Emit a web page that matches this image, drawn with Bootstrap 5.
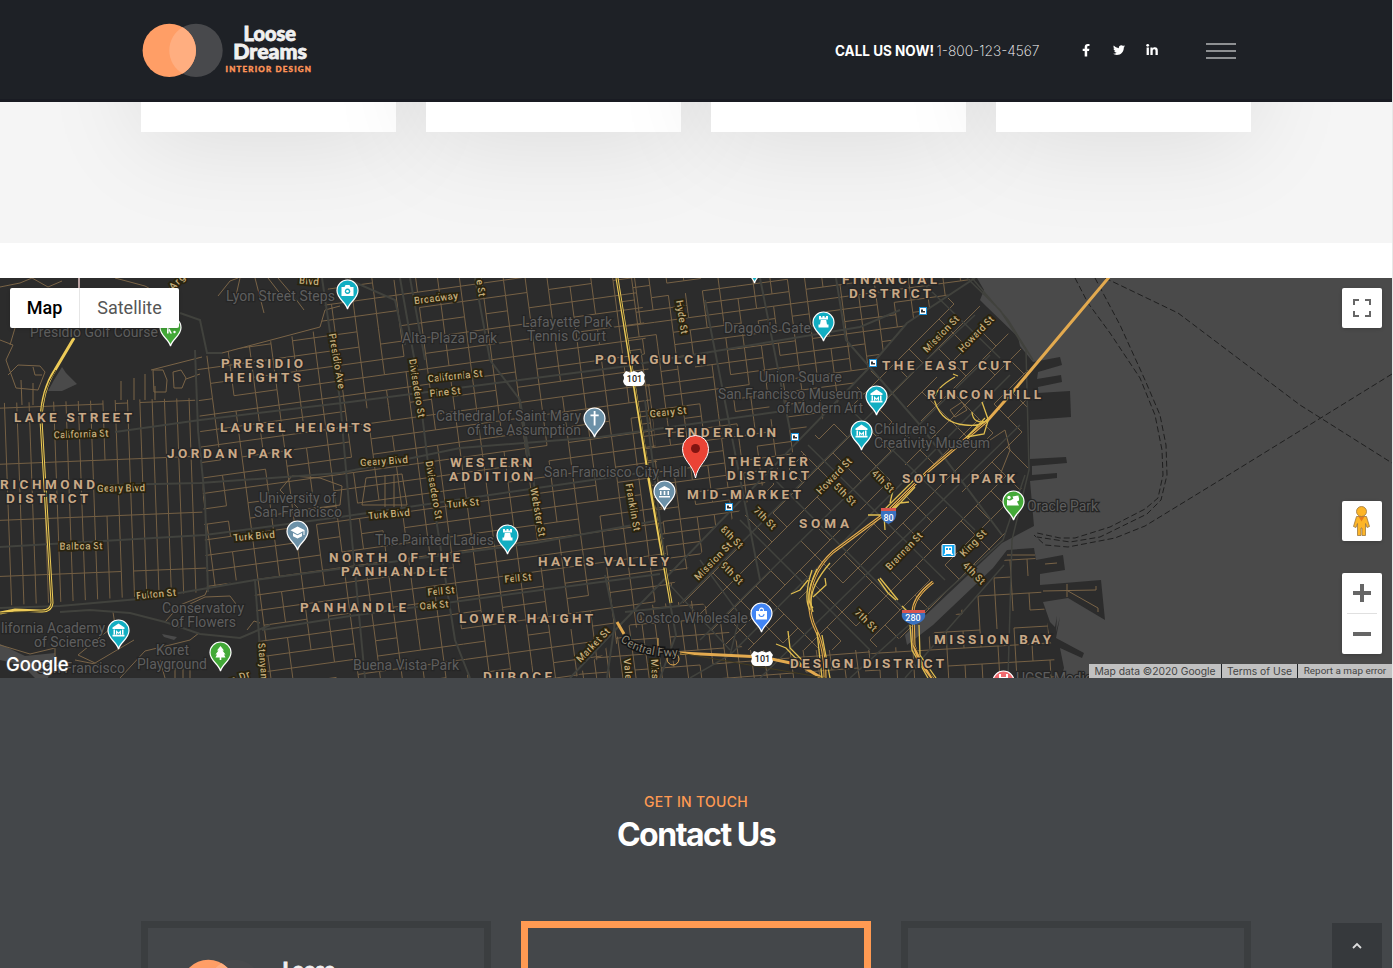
<!DOCTYPE html>
<html lang="en">
<head>
<meta charset="utf-8">
<meta name="viewport" content="width=device-width, initial-scale=1">
<title>Loose Dreams Interior Design</title>
<link href="https://cdn.jsdelivr.net/npm/bootstrap@5.3.0/dist/css/bootstrap.min.css" rel="stylesheet">
<style>
  html, body { height: 968px; overflow: hidden; }
  body { font-family: Inter, "Open Sans", sans-serif; background: #fff; }
  .page-wrap { height: 968px; margin-right: 1px; overflow: hidden; box-shadow: 1px 0 0 #e8e8e8; }
  .site-head { height: 102px; background: #1e2126; border-bottom: 3px solid #191b22; position: relative; z-index: 2; }
  .phone-line { width: 205px; font-size: 14px; line-height: 20px; white-space: nowrap; margin-right: 40px; padding-top: 2px; }
  .phone-line svg, .soc svg { display: block; }
  .soc { gap: 21px; margin-right: 48px; }
  .burger { width: 30px; gap: 5px; margin-right: 15px; padding-top: 2px; }
  .burger span { height: 2px; background: #8e9092; }
  .team { height: 141px; background: #f5f5f5; overflow: hidden; }
  .team .row, .offices .row { --bs-gutter-x: 30px; }
  .team .container, .offices .container, .site-head .container { padding: 0 15px; }
  .team-card { height: 330px; margin-top: -300px; background: #fff; box-shadow: 0 10px 100px rgba(0,0,0,.1); }
  .map-box { height: 400px; margin-top: 35px; background: #4a4a4a; overflow: hidden; }
  .map-box > svg { display: block; }
  .ctl { background: #fff; border-radius: 2px; box-shadow: 0 1px 4px -1px rgba(0,0,0,.3); position: absolute; }
  .ctl-type { left: 10px; top: 10px; width: 169px; height: 40px; font: 18px/40px Roboto, sans-serif; color: #565656; text-align: center; }
  .ctl-type b { width: 70px; border-right: 1px solid #e6e6e6; font-weight: 500; color: #000; }
  .ctl-sq { right: 10px; width: 40px; height: 40px; }
  .ctl-zoom { height: 81px; top: 295px; }
  .attrib { position: absolute; right: 0; bottom: 0; height: 14px; font: 10.3px/14px Inter, sans-serif; color: #444; white-space: nowrap; }
  .attrib span { background: #c1c1c1; text-align: center; }
  .contact { height: 290px; padding-top: 113px; background: #44474a; }
  .kicker { font-size: 14px; line-height: 21px; font-weight: 500; color: #ff9a52; letter-spacing: .3px; }
  .contact h2 { font-size: 32px; line-height: 46px; font-weight: 700; letter-spacing: -1.5px; color: #fff; margin-bottom: 63px; }
  .office { height: 120px; border: 7px solid #3b3e40; }
  .office.hot { border-color: #ff9a52; }
  .office svg { display: block; margin: 31px 0 0 32px; }
  .to-top { position: absolute; left: 1332px; top: 923px; width: 50px; height: 45px; background: #36393c; }
  .lb-area { font: 700 13.5px Roboto, sans-serif; fill: #c9a987; stroke: #262626; stroke-width: 3px; paint-order: stroke; }
  .lb-road { font: 500 10px Roboto, sans-serif; fill: #c4ad7c; stroke: #29230f; stroke-width: 3.5px; paint-order: stroke; text-anchor: middle; }
  .lb-poi { font: 400 14px Roboto, sans-serif; fill: #5e5e5e; stroke: #252525; stroke-width: 2.5px; paint-order: stroke; }
</style>
</head>
<body>
<div class="page-wrap position-relative">
  <header class="site-head">
    <div class="container h-100 d-flex align-items-center">
      <svg class="me-auto" width="174" height="60" viewBox="141 20 174 60">
        <g id="brand">
          <circle cx="196" cy="50.4" r="26.7" fill="#48494c"/>
          <circle cx="169.3" cy="50.4" r="26.7" fill="#ff9e66"/>
          <path d="M182.6 27.3a26.7 26.7 0 0 1 0 46.2a26.7 26.7 0 0 1 0-46.2z" fill="#ffae80"/>
          <g font-family="Lato, sans-serif" font-weight="900" fill="#f0f0f0" stroke="#f0f0f0" stroke-width=".8">
            <text x="243.5" y="41.3" font-size="20" textLength="52.5" lengthAdjust="spacingAndGlyphs">Loose</text>
            <text x="233.3" y="58.6" font-size="20" textLength="73.7" lengthAdjust="spacingAndGlyphs">Dreams</text>
            <text x="225.5" y="72" font-size="8" fill="#ff9458" stroke="#ff9458" stroke-width=".4" textLength="85.500" lengthAdjust="spacing">INTERIOR DESIGN</text>
          </g>
        </g>
      </svg>
      <div class="phone-line">
        <svg width="205" height="20" viewBox="836 41 205 20" fill="#fff">
          <text x="836" y="56" font-weight="700" textLength="99" lengthAdjust="spacingAndGlyphs">CALL US NOW!</text>
          <text x="937.500" y="56" font-weight="200" textLength="103" lengthAdjust="spacingAndGlyphs">1-800-123-4567</text>
        </svg>
      </div>
      <div class="soc d-flex">
        <svg width="12" height="14" viewBox="1080 43 12 14" fill="#fff"><path d="M1084.7 56.500v-5.500h-2v-2.300h2v-1.700c0-2 1.200-3.100 3-3.100.9 0 1.800.2 1.800.2v1.900h-1c-1 0-1.300.6-1.300 1.200v1.500h2.200l-.4 2.300h-1.800v5.500z"/></svg>
        <svg width="12" height="14" viewBox="0 0 12 14"><path transform="translate(0 1) scale(.0235)" fill="#fff" d="M459 152c.3 4.500.3 9 .3 14 0 139-106 299-299 299-59 0-115-17-161-47 8 1 16 1.300 25 1.300 49 0 94-17 130-45-46-1-85-31-98-73 6.500 1 13 1.600 20 1.600 9 0 19-1.300 28-3.600-48-10-84-52-84-103v-1c14 8 30 13 47 14-28-19-47-51-47-88 0-19 5-37 14-53 52 64 129 105 216 110-1.600-8-2.600-16-2.600-24 0-58 47-105 105-105 30 0 58 13 77 33 24-5 46-13 67-25-8 24-24 45-46 58 21-2 42-8 61-16-14 21-32 39-52 54z"/></svg>
        <svg width="12" height="14" viewBox="0 0 12 14" fill="#fff"><circle cx="1.700" cy="2.300" r="1.400"/><path d="M.6 4.500h2.300v7.400H.6zM4.400 4.500h2.200v1c.4-.7 1.200-1.200 2.300-1.200 2.300 0 2.900 1.500 2.900 3.500v4.100H9.500V8.200c0-.9-.1-1.900-1.300-1.900s-1.500.9-1.500 1.900v3.700H4.400z"/></svg>
      </div>
      <div class="burger d-flex flex-column"><span></span><span></span><span></span></div>
    </div>
  </header>

  <section class="team">
    <div class="container"><div class="row">
      <div class="col-3"><div class="team-card"></div></div>
      <div class="col-3"><div class="team-card"></div></div>
      <div class="col-3"><div class="team-card"></div></div>
      <div class="col-3"><div class="team-card"></div></div>
    </div></div>
  </section>

  <section class="map-box position-relative">
    <svg id="map" width="1392" height="400" viewBox="0 278 1392 400">
      <defs>
        <clipPath id="c-west"><path d="M0 403L195 398L207 585L205 592L0 606z"/></clipPath>
        <clipPath id="c-mid"><path d="M197 358L320 330L330 278H640L670 600L575 678H262L253 575L207 590z"/></clipPath>
        <clipPath id="c-down"><path d="M618 278H972L907 323L867 370L668 590z"/></clipPath>
        <clipPath id="c-soma"><path d="M676 595L867 375L907 328L962 288L1020 345L1028 370V470L1005 535L905 636L870 650H730z"/></clipPath>
        <clipPath id="c-bay"><path d="M1007 556L1035 556L1043 602L1058 678H865V655L925 640L988 588z"/></clipPath>
        <clipPath id="c-south"><path d="M575 678L650 605L700 600L745 650H870V678z"/></clipPath>
        <g id="p-head"><path d="M0 18C-1.500 11-10.500 8-10.500-.5A10.500 10.500 0 0 1 10.500-.5C10.500 8 1.500 11 0 18z" stroke="#fff" stroke-width="1.200"/></g>
        <g id="i-rook" fill="#fff"><path d="M-4.500-6h2v1.500h1.500v-1.500h2v1.500h1.500v-1.500h2V-2.500h-9zM-2.700-2h5.400l.8 4.500h1.500v3h-10v-3h1.500z"/></g>
        <g id="i-mus" fill="#fff"><path d="M0-7L6-3v1.500h-12V-3zM-5-1h1.500v5H-5zM3.500-1H5v5H3.500zM-6 4.300H6V6H-6zM-2.500 4V-.5L0 2l2.500-2.500V4H1.300V2.300L0 3.600-1.300 2.300V4z"/></g>
      </defs>
      <rect y="278" width="1392" height="400" fill="#4a4a4a"/>
      <path fill="#2c2c2c" d="M0 278H977L984 290L980 300L987 307L1018 337L1020 346L1029 357L1033 362L1060 357L1062 365L1038 372L1037 379L1061 375L1062 382L1038 387V393L1070 391L1071 417L1030 420V459L1066 457L1067 463L1032 466V475L1057 473V478L1030 481L1034 526L1002 543L913 627L905 635L907 645L933 625L993 568L1007 550L1034 548L1036 560L1063 555L1065 570L1040 574V585L1101 580L1105 620L1068 598L1043 602L1050 622L1055 627L1057 616L1056 632L1060 617L1056 638L1084 653L1082 658L1060 648L1064 668L1061 678H0z"/>
      <path fill="#4a4a4a" d="M62 367L66 373L77 384L62 391H48L54 380zM0 644L25 656L55 653L48 678H35L22 665L0 660zM162 634L177 637L174 640L164 637z"/>
      <path fill="none" stroke="#1f1f1f" stroke-dasharray="6 3" d="M1075 278L1088 303L1110 333L1140 378L1155 415L1162 450L1163 475L1158 498L1145 509L1110 527L1075 538H1060L1037 533M1095 278L1120 325L1145 380L1160 415L1166 445L1167 475L1161 500L1147 514L1100 537L1070 542L1037 537M1105 278L1178 313L1300 405L1392 463M1392 374L1230 474L1145 526L1115 538L1068 547L1045 545L1034 535"/>
      <g id="streets" fill="none"></g>
      <g fill="none" stroke="#7a6447" stroke-width="1">
        <path d="M0 287L20 283L32 278M32 278L48 287L62 281M115 278L145 286L163 296L178 278M0 340L13 345L6 360L16 388L38 390L45 372L40 366L18 365L8 375M15 328L10 345M33 367L35 375H42M218 296L230 281L238 278M235 300L240 278M255 278L264 313M268 278L285 300M278 278L295 298L304 310M151 370L202 357M222 353L320 327L325 310L340 306M153 370H163L167 380L166 392H154zM173 372L181 370L186 378L182 388H174zM186 379L200 374M0 645L30 654L55 648L55 656M113 612L115 625L78 655L95 663L134 640M75 660L100 665M165 622L180 605L205 595L208 588M120 678L145 651L170 645L190 640L199 633M190 604L205 597L230 596L242 612M247 630L254 621L260 623M160 660L165 678M175 668V678M183 668V678M190 665V678"/>
        <path d="M121 381V400M134 378V400M145 374V400M155 386V400M21 380L22 405M33 383V405M280 490L292 476L320 478L342 486L340 505L300 510zM366 478L402 474L407 505H362zM385 475V507M394 475V507M1007 555H1035M1045 564L1057 563M1043 591L1096 590V586M1067 584V597M1068 591L1098 608V612M950 410L962 402L967 410L955 417zM990 440L1005 430L1010 450L1000 475"/>
      </g>
      <g fill="none" stroke="#41423d" stroke-width="2">
        <path d="M180 313L200 320L207 353L222 353M0 608L60 606L150 598L255 580L535 543L660 520M195 350L198 430L205 500L208 592M0 547L205 535L340 517L640 473M110 485L200 483L340 473L460 448L600 437L790 410M115 432L200 420L350 402L620 367L860 327L900 310M322 278L340 400L352 540L365 678M400 278L418 380L430 480L455 640L470 678M255 580L262 678M262 630L350 616L660 574M60 612L90 610L130 613L165 622L200 634L240 638L270 625M345 278L395 300L405 345M410 278L425 360M475 278L490 360L520 400L540 520M520 400L530 480M605 575L615 622L607 678M570 678L620 625L867 370L907 323L975 278M625 612L680 606M645 400L670 603L676 635L660 678M705 300L760 580M760 278L790 430M836 278L846 340L920 425L1002 535"/>
        <path stroke-width="1.500" d="M740 520L870 650M775 480L910 615M808 445L945 580M846 405L975 530M670 585L730 650M700 640L990 355M730 655L1010 375M760 678L1020 425M850 678L1003 540L1025 475M680 604L910 375L975 315M700 560L740 615L730 655L690 678M967 278L1000 310L1026 350L1029 470L1012 540L1008 678M972 278L1008 320L1033 360M925 285L1000 358M905 678L1004 565"/>
      </g>
      <g fill="none" stroke="#e3aa4f" stroke-width="3">
        <path d="M79 278V290" stroke="#b8a0a0" stroke-width="2"/>
        <g stroke="#edcb58"><path d="M74 338L55 370Q42 390 41 420L44 470L52 603Q51 612 40 611L15 610L0 613"/><path d="M617 278L647 465M648 474L671 603"/></g>
        <path d="M1110 276L1010 395L988 420L927 472L887 512L833 552Q813 570 810 595Q808 614 816 630Q825 648 825 678M617 622L624 634M680 653L762 657L800 665L825 680M933 582Q912 598 913 614L914 645Q918 662 934 680" />
      </g>
      <g fill="none" stroke="#433b20" stroke-width="1">
        <path d="M56 370Q42 390 41 420L44 470L52 603Q51 612 40 611L0 613M617 278L671 603M988 420L927 472L887 512L833 552Q813 570 810 595Q808 614 816 630Q825 648 825 678M680 653L825 678M933 582Q912 598 913 614L914 645L934 680"/>
      </g>
      <g fill="none" stroke="#dfbd4f" stroke-width="1.300">
        <path d="M955 377Q932 390 935 402Q942 423 965 425Q982 427 988 419L982 402M972 412Q973 425 988 421L984 434L967 437L985 418M958 376L953 374M915 487L889 515L868 515M885 530L884 515L900 503L909 502M916 478L885 509M893 490L890 503M812 570Q803 598 810 610M817 569Q803 598 813 608M830 563Q805 592 813 612M791 594L800 590L808 580M825 578L826 585L813 597M878 579L888 593L896 600M880 578L898 600M902 606L910 614M776 644L786 648L802 665M788 631L790 648L805 663M910 625L912 650L928 678M919 625L920 655L936 678M822 635L830 678M817 632L822 678"/>
      </g>
      <g stroke="#e3aa4f" fill="none"><circle cx="673" cy="659" r="6"/><path d="M658 638V650"/></g>
      <g id="labels"></g>

      <g font-family="Roboto, sans-serif" font-size="9" font-weight="500" text-anchor="middle">
        <path id="us" d="M626 371l4 1.500l4-1.500l4 1.500l4-1.500l3 4q-2 3 0 6q-1 5-5 5h-12q-4 0-5-5q2-3 0-6z" fill="#fff"/><use href="#us" x="128" y="280"/>
        <g fill="#222"><text x="634.500" y="382">101</text><text x="762.500" y="662">101</text></g>
        <g fill="#3a72c0"><path d="M881 511h15q2 9-7.500 13q-9.500-4-7.500-13z"/><path d="M902 613h23q2 8-11.500 12q-13.500-4-11.500-12z"/></g>
        <path fill="#d9554f" d="M881 508h15v3h-15zM902 610h23v3h-23z"/>
        <g fill="#fff"><text x="888.500" y="520.500">80</text><text x="913" y="621">280</text></g>
      </g>
      <g id="transit"></g>

      <g fill="#12aec2">
        <use href="#p-head" x="754.500" y="265"/><use href="#p-head" x="347.500" y="291"/><use href="#p-head" x="823.500" y="323"/><use href="#p-head" x="876.500" y="397"/><use href="#p-head" x="861.500" y="432"/><use href="#p-head" x="507.500" y="536"/><use href="#p-head" x="118.500" y="631"/>
      </g>
      <g fill="#6c91a8"><use href="#p-head" x="594.500" y="419"/><use href="#p-head" x="664.500" y="492"/><use href="#p-head" x="297.500" y="532"/></g>
      <g fill="#43a938"><use href="#p-head" x="170.500" y="328"/><use href="#p-head" x="220.500" y="653"/><use href="#p-head" x="1013.500" y="502"/></g>
      <use href="#p-head" x="761.500" y="614" fill="#4285f4"/><use href="#p-head" x="1003.500" y="682" fill="#f06b70"/>
      <use href="#i-rook" x="823.500" y="322"/><use href="#i-rook" x="507.500" y="535"/>
      <use href="#i-mus" x="876.500" y="396.500"/><use href="#i-mus" x="861.500" y="431.500"/><use href="#i-mus" x="118.500" y="630.500"/>
      <g fill="#fff">
        <path fill-rule="evenodd" d="M341.500 287h3l1-2h4l1 2h3v9h-12zM347.500 288.500a2.800 2.800 0 1 0 .1 0z"/><circle cx="347.500" cy="291.300" r="1.300"/>
        <path d="M593.700 411h1.800v3.500h3.200v1.800h-3.200v9.200h-1.800v-9.200h-3.200v-1.800h3.200z"/>
        <path d="M664.500 486l5.500 3v1h-11v-1zM660 491h1.500v4H660zM663.700 491h1.600v4h-1.600zM667.500 491h1.500v4h-1.500zM659 496h11v1.500h-11z"/>
        <path d="M297.500 526.500l7 3.500v5h-1v-4l-6 3.200l-7-4zM293 533l4.500 2.300l4.500-2.300v3.200l-4.500 2.300l-4.500-2.300z"/>
        <path d="M220.500 646l3.500 4.500h-1.500l3 4h-1.500l1.500 3h-4.200v2.500h-1.600v-2.500h-4.200l1.500-3h-1.500l3-4h-1.500z"/>
        <circle cx="174.500" cy="332" r="1.200"/><path d="M167 326h1.600v7.500H167zM169.500 328.500l2.500 5h-1.800l-1.600-3.500z"/>
        <path d="M1007 499.500q3 2 5 0t7-2v3l-2 1l2 4h-12zM1012.500 496.500l6-1v2l-5 1.500z"/><circle cx="1009" cy="497.500" r="1.700"/>
        <path fill-rule="evenodd" d="M756 611h11v8.500h-11zM758.500 614a3 3 0 0 0 6 0h-1a2 2 0 0 1-4 0z"/><path d="M759 611q0-3.500 2.500-3.500t2.500 3.500h-1q0-2.300-1.500-2.300t-1.500 2.300z"/>
        <path d="M999 674h2v4h-2zM1006 674h2v4h-2zM1001 677h5v1h-5z"/>
      </g>
      <path d="M695.500 478C693 464 682.500 461 682.500 448.500A13 13 0 0 1 708.500 448.500C708.500 461 698 464 695.500 478z" fill="#ea4335" stroke="#fff"/><circle cx="695.500" cy="448.500" r="4.500" fill="#811411"/>
      <text x="6" y="671" font-family="Inter, sans-serif" font-size="18.500" font-weight="500" fill="#fff" stroke="#555" stroke-width="1" paint-order="stroke" textLength="62.500">Google</text>
    </svg>

    <div class="ctl ctl-type d-flex"><b>Map</b><span class="flex-fill">Satellite</span></div>
    <div class="ctl ctl-sq" style="top:10px"><svg class="d-block" width="40" height="40" fill="none" stroke="#666" stroke-width="2"><path d="M12 17v-5h5M23 12h5v5M28 23v5h-5M17 28h-5v-5"/></svg></div>
    <div class="ctl ctl-sq" style="top:223px"><svg class="d-block" width="40" height="40" stroke="#9c7740" stroke-width=".8"><path fill="#fdb528" d="M14.500 15.500h10l3 10l-2.500 1l-1.500-4v12h-3.500v-7.500h-1v7.500h-3.500v-12l-1.500 4l-2.500-1z"/><path d="M16.500 15.500h6l-3 5z" fill="#e67c1e" stroke="none"/><circle cx="19.500" cy="10.500" r="5" fill="#fdb528"/></svg></div>
    <div class="ctl ctl-sq ctl-zoom"><svg class="d-block" width="40" height="81"><path stroke="#666" stroke-width="4" d="M11 20h18M20 11v18M11 61h18"/><path stroke="#e0e0e0" d="M5 40.500h30"/></svg></div>
    <div class="attrib d-flex"><span style="width:132px">Map data ©2020 Google</span><span class="border-start border-dark" style="width:76px">Terms of Use</span><span class="border-start border-dark" style="width:95px;font:9.900px/14px Roboto">Report a map error</span></div>
  </section>

  <section class="contact offices text-center">
    <div class="kicker">GET IN TOUCH</div>
    <h2>Contact Us</h2>
    <div class="container"><div class="row">
      <div class="col-4"><div class="office"><svg width="174" height="60" viewBox="141 23 174 60"><use href="#brand"/></svg></div></div>
      <div class="col-4"><div class="office hot"></div></div>
      <div class="col-4"><div class="office"></div></div>
    </div></div>
  </section>
  <a class="to-top d-flex align-items-center justify-content-center" href="#" aria-label="Back to top"><svg width="10" height="8" fill="none" stroke="#ddd" stroke-width="1.800"><path d="M1 6l4-4l4 4"/></svg></a>
</div>

<script src="https://cdn.jsdelivr.net/npm/bootstrap@5.3.0/dist/js/bootstrap.bundle.min.js"></script>
<script>
const NS = 'http://www.w3.org/2000/svg';
function add(parent, tag, attrs, text) {
  const el = document.createElementNS(NS, tag);
  for (const k in attrs) el.setAttribute(k, attrs[k]);
  if (text) el.textContent = text;
  parent.appendChild(el);
  return el;
}

// City blocks: each district is a skewed lattice with some segments left out.
let seed = 7;
const rnd = () => (seed = (seed * 16807) % 2147483647) / 2147483647;
function blocks(clip, x0, y0, ax, ay, bx, by, n, m, gapA, gapB, color) {
  let d = '';
  const P = (i, j) => (x0 + i * ax + j * bx).toFixed(1) + ' ' + (y0 + i * ay + j * by).toFixed(1);
  for (let i = 0; i < n; i++) for (let j = 0; j < m; j++) {
    if (rnd() > gapA) d += 'M' + P(i, j) + 'L' + P(i + 1, j);
    if (rnd() > gapB) d += 'M' + P(i, j) + 'L' + P(i, j + 1);
  }
  add(document.getElementById('streets'), 'path', { d, stroke: color, 'stroke-width': 1, 'clip-path': `url(#${clip})` });
}
blocks('c-west', -22, 353, 12.3, -.5, 2, 56, 20, 5, .03, .02, '#756044');
blocks('c-mid', 130, 270, 21.5, -3, 2, 15.3, 28, 32, .14, .12, '#766145');
blocks('c-down', 560, 260, 17, -2.3, 1.6, 12.3, 28, 32, .25, .27, '#766145');
blocks('c-soma', 640, 590, 15, -15, 14, 14, 30, 30, .2, .5, '#766145');
blocks('c-bay', 840, 570, 17, -1, 1, 17, 15, 10, .25, .25, '#766145');
blocks('c-south', 560, 600, 13, -1, 2, 15, 28, 8, .15, .2, '#766145');

const labels = document.getElementById('labels');
// Points of interest: text, left edge, baseline, width
[['Lyon Street Steps',226,301,109],['Presidio Golf Course',30,337,128],['Alta Plaza Park',402,343,95],['Lafayette Park',522,327,90],['Tennis Court',527,341,79],
 ["Dragon's Gate",724,333,87],['Union Square',759,382,83],['San Francisco Museum',718,399,145],['of Modern Art',777,413,86],["Children's",874,434,62],['Creativity Museum',874,448,116],
 ['Cathedral of Saint Mary',436,421,145],['of the Assumption',467,435,114],['San Francisco City Hall',544,477,143],['University of',259,503,77],['San Francisco',254,517,88],
 ['The Painted Ladies',375,545,119],['Conservatory',162,613,82],['of Flowers',171,627,65],['lifornia Academy',1,633,104],['of Sciences',34,647,72],['Koret',156,655,33],['Playground',137,669,70],
 ['San Francisco',37,673,88],['Buena Vista Park',353,670,106],['Costco Wholesale',636,623,112],['Oracle Park',1027,511,71],['UCSF Medical Center',1016,683,132]
].forEach(([t, x, y, w]) => add(labels, 'text', { class: 'lb-poi', x, y, textLength: w }, t));
// Streets: text, centre, angle, width
[['Broadway',436,298,-7,44],['California St',455,376,-6,55],['Pine St',445,392,-6,31],['California St',81,434,-2,55],['Geary Blvd',384,461,-4,48],['Geary Blvd',121,488,-1,48],['Balboa St',81,546,-1,43],
 ['Turk Blvd',254,536,-5,42],['Turk Blvd',389,514,-5,42],['Turk St',463,503,-5,32],['Fulton St',156,594,-5,40],['Fell St',518,578,-5,27],['Fell St',441,591,-5,27],['Oak St',434,605,-5,29],['Geary St',668,412,-6,37],
 ['Presidio Ave',337,361,80,56],['Divisadero St',417,388,81,59],['Divisadero St',434,490,80,59],['Webster St',538,512,80,49],['Franklin St',633,507,80,48],['Hyde St',682,317,81,34],['e St',481,288,82,17],
 ['Stanyan',263,661,85,36],['Vale',628,669,85,21],['Miss',655,669,87,20],['Market St',593,645,-46,43],['Mission St',713,561,-46,49],['8th St',732,537,45,27],['9th St',732,573,45,27],['7th St',765,518,45,27],
 ['5th St',845,494,45,27],['4th St',883,481,45,27],['Howard St',834,476,-46,46],['Mission St',941,334,-46,47],['Howard St',976,334,-46,46],['Brannan St',904,551,-46,48],['King St',973,543,-46,33],['4th St',974,573,45,27],['7th St',866,620,45,27],
 ['Blvd',309,281,5,20],['Arg',177,282,-45,18],['n Dr',240,677,-20,20]
].forEach(([t, x, y, a, w]) => add(labels, 'text', { class: 'lb-road', x: 0, y: 3.5, textLength: w, transform: `translate(${x} ${y}) rotate(${a})` }, t));
// Neighbourhoods: text, left edge, baseline, width
[['PRESIDIO',221,368,82],['HEIGHTS',224,382,77],['LAKE STREET',14,422,118],['LAUREL HEIGHTS',220,432,151],['JORDAN PARK',167,458,125],['RICHMOND',0,489,95],['DISTRICT',6,503,82],['WESTERN',450,467,82],['ADDITION',449,481,84],
 ['POLK GULCH',595,364,111],['TENDERLOIN',665,437,111],['THEATER',728,466,80],['DISTRICT',727,480,82],['MID-MARKET',687,499,114],['SOMA',799,528,50],['SOUTH PARK',902,483,113],['THE EAST CUT',882,370,129],['RINCON HILL',927,399,114],
 ['FINANCIAL',842,284,95],['DISTRICT',849,298,82],['NORTH OF THE',329,562,131],['PANHANDLE',341,576,106],['PANHANDLE',300,612,106],['HAYES VALLEY',538,566,131],['LOWER HAIGHT',459,623,134],['DUBOCE',483,681,69],['MISSION BAY',934,644,117],['DESIGN DISTRICT',790,668,154]
].forEach(([t, x, y, w]) => add(labels, 'text', { class: 'lb-area', x, y, textLength: w }, t));
// Label that follows the freeway's bend
add(labels, 'path', { id: 'fwy', d: 'M620 641Q643 659 681 656', fill: 'none' });
const fw = add(labels, 'text', { fill: '#8a8578', stroke: '#151515', 'stroke-width': 3, 'paint-order': 'stroke', 'font-family': 'Roboto', 'font-size': 11.8 });
add(fw, 'textPath', { href: '#fwy' }, 'Central Fwy');
// Transit stops
const tr = document.getElementById('transit');
[[923, 311], [873, 363], [795, 437], [729, 507]].forEach(([x, y]) => {
  add(tr, 'rect', { x: x - 3.5, y: y - 3.5, width: 7, height: 7, fill: '#fff', stroke: '#1b8fd6', 'stroke-width': 1 });
  add(tr, 'path', { d: `M${x - 2} ${y - 1.5}h2v3h-2zM${x} ${y}h2v1.5h-2z`, fill: '#333' });
});
add(tr, 'rect', { x: 942, y: 544.5, width: 13, height: 12, rx: 1, fill: '#12a5ee', stroke: '#fff' });
add(tr, 'path', { d: 'M945 546.5h7v6.500l1.500 2h-2l-1-1h-4l-1 1h-2l1.500-2z', fill: '#fff' });
add(tr, 'path', { d: 'M946 548h2v2h-2zM949 548h2v2h-2z', fill: '#12a5ee' });
</script>
</body>
</html>
